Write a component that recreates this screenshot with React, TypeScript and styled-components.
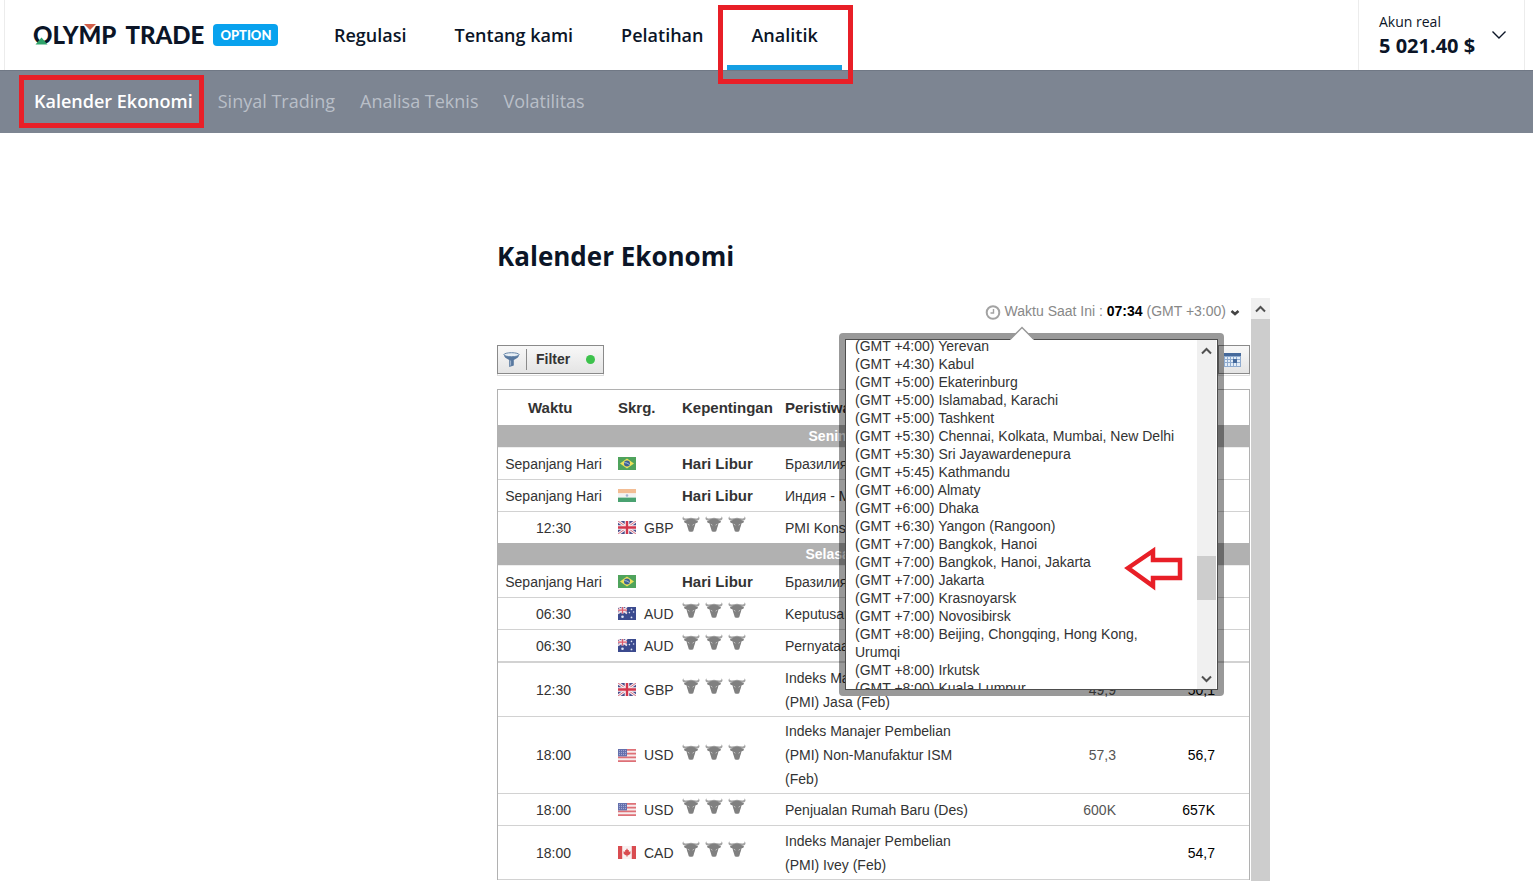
import React from "react";
import styled, { createGlobalStyle, css } from "styled-components";

const GlobalStyle = createGlobalStyle`
  *, *::before, *::after { box-sizing: border-box; }
  body { margin: 0; background: #fff; color: #333; font-family: "Liberation Sans", Arial, sans-serif; }
  button { font: inherit; color: inherit; cursor: pointer; }
  a { color: inherit; text-decoration: none; }
  svg { display: block; flex: none; }
`;

const uiFont = css`
  font-family: "Open Sans", "Noto Sans", sans-serif;
`;

const Page = styled.div`
  height: 100vh;
  display: flex;
  flex-direction: column;
  overflow: hidden;
`;

/* ---------- header ---------- */

const Header = styled.header`
  ${uiFont}
  display: flex;
  flex: none;
  height: 70px;
  margin: 0 8px 0 4px;
  border: 0 solid #ececec;
  border-width: 0 1px;
  color: #0b1527;
`;

const Brand = styled.a`
  display: flex;
  align-items: center;
  gap: 9px;
  width: 305px;
  padding-left: 28px;
`;

const Wordmark = styled.span`
  position: relative;
  display: flex;
  gap: 9px;
  font: 900 24px/24px Lato, sans-serif;
  white-space: nowrap;
`;

const WordmarkAccents = styled.svg`
  position: absolute;
  left: 0;
  top: 0;
`;

const Badge = styled.span`
  padding: 0 7px;
  border-radius: 4px;
  background: #08a2ee;
  color: #fff;
  font: 900 13px/22px Lato, sans-serif;
`;

const MainNav = styled.nav`
  display: flex;
  flex: 1;
`;

const NavLink = styled.a<{ $active?: boolean }>`
  position: relative;
  padding: 0 24px;
  border-bottom: 5px solid ${(p) => (p.$active ? "#149fe3" : "transparent")};
  font-size: 18px;
  font-weight: 600;
  line-height: 70px;
  white-space: nowrap;
`;

const Highlight = styled.span<{ $inset: string }>`
  position: absolute;
  inset: ${(p) => p.$inset};
  border: 5px solid #e81f27;
  z-index: 2;
`;

const Account = styled.button`
  display: flex;
  align-items: center;
  gap: 16px;
  width: 166px;
  padding: 0 0 0 20px;
  border: 0;
  border-left: 1px solid #ececec;
  background: none;
  text-align: left;
  white-space: nowrap;
`;

const AccountText = styled.span`
  display: flex;
  flex-direction: column;
  padding-bottom: 2px;
  font-size: 14px;
  line-height: 24px;
`;

const Balance = styled.strong`
  font-size: 20px;
`;

const SubNav = styled.nav`
  ${uiFont}
  display: flex;
  flex: none;
  gap: 25px;
  height: 63px;
  padding-left: 34px;
  border-top: 1px solid #707885;
  background: #7d8592;
`;

const SubLink = styled.a<{ $active?: boolean }>`
  position: relative;
  color: ${(p) => (p.$active ? "#fff" : "#b9bfc8")};
  font-size: 18px;
  font-weight: ${(p) => (p.$active ? 600 : 400)};
  line-height: 61px;
  white-space: nowrap;
`;

/* ---------- calendar widget ---------- */

const Main = styled.main`
  display: flex;
  flex-direction: column;
  flex: 1;
  min-height: 0;
  padding: 105px 263px 0 497px;
`;

const Title = styled.h1`
  ${uiFont}
  flex: none;
  margin: 0 0 24px;
  color: #0b1527;
  font-size: 26px;
  line-height: 36px;
`;

const Frame = styled.section`
  position: relative;
  display: grid;
  grid-template-columns: minmax(0, 1fr) 19px;
  flex: 1;
  min-height: 0;
`;

const FrameBody = styled.div`
  min-height: 0;
  overflow: hidden;
  padding-right: 1px;
`;

const ScrollTrack = styled.div`
  display: flex;
  flex-direction: column;
  align-items: stretch;
  background: #f0f0f0;
`;

const ScrollButton = styled.button`
  display: flex;
  align-items: center;
  justify-content: center;
  flex: none;
  height: 21px;
  padding: 0;
  border: 0;
  background: #f0f0f0;
`;

const ScrollThumb = styled.div<{ $height?: number }>`
  flex: ${(p) => (p.$height ? "none" : 1)};
  height: ${(p) => (p.$height ? `${p.$height}px` : "auto")};
  background: #cdcdcd;
`;

const TimeBar = styled.div`
  display: flex;
  justify-content: flex-end;
  padding-right: 10px;
`;

const TimeButton = styled.button`
  display: flex;
  align-items: center;
  gap: 4px;
  padding: 0;
  border: 0;
  background: none;
  color: #888;
  font-size: 14px;
  line-height: 27px;
  white-space: nowrap;

  strong { color: #000; }
`;

const Toolbar = styled.div`
  display: flex;
  justify-content: space-between;
  margin: 20px 0 15px;
`;

const ToolButton = styled.button`
  display: flex;
  align-items: center;
  height: 29px;
  padding: 0 8px 0 5px;
  border: 1px solid #8a8a8a;
  background: linear-gradient(#f8f8f8, #e4e4e4);
  box-shadow: 0 2px 0 -1px #fff, 0 2px 0 #ddd;
  font-size: 14px;
  font-weight: 700;
`;

const FilterLabel = styled.span`
  margin: 0 16px 0 6px;
  padding-left: 9px;
  border-left: 1px solid #8a8a8a;
  line-height: 21px;
`;

const Dot = styled.span`
  width: 9px;
  height: 9px;
  border-radius: 50%;
  background: #3cc24c;
`;

const Table = styled.table`
  width: 100%;
  table-layout: fixed;
  border-collapse: separate;
  border-spacing: 0;
  border: 1px solid #b1b1b1;
  border-bottom: 0;
  font-size: 14px;
  line-height: 24px;
`;

const Col = styled.col<{ $width?: number }>`
  width: ${(p) => (p.$width ? `${p.$width}px` : "auto")};
`;

const HeadCell = styled.th<{ $indent?: number }>`
  height: 35px;
  padding: 0 0 0 ${(p) => p.$indent ?? 5}px;
  font-size: 15px;
  text-align: left;
  white-space: nowrap;
`;

const DayCell = styled.th`
  height: 23px;
  padding: 0;
  border-bottom: 1px solid #eee;
  background: #b1b1b1;
  color: #fff;
  font-size: 14px;
  line-height: 22px;
`;

const Row = styled.tr<{ $height: number; $line: number }>`
  height: ${(p) => p.$height}px;

  td {
    padding: 0 5px;
    border-bottom: ${(p) => p.$line}px solid #d2d2d2;
  }
`;

const Cell = styled.td<{ $align?: "center" | "right"; $tone?: string }>`
  color: ${(p) => p.$tone ?? "inherit"};
  text-align: ${(p) => p.$align ?? "left"};
  white-space: nowrap;
`;

const Holiday = styled.strong`
  font-size: 15px;
`;

const Currency = styled.span`
  display: flex;
  align-items: center;
  gap: 8px;
  padding-left: 4px;
`;

const Bulls = styled.span`
  display: flex;
  gap: 5px;
  padding-bottom: 7px;
`;

/* ---------- time zone popup ---------- */

const Popup = styled.div`
  position: absolute;
  top: 35px;
  right: 46px;
  width: 385px;
  padding: 6px;
  border-radius: 4px;
  background: rgba(0, 0, 0, 0.4);
  z-index: 3;
`;

const Notch = styled.svg`
  position: absolute;
  left: 171px;
  top: -7px;
`;

const PopupBox = styled.div`
  display: grid;
  grid-template-columns: 1fr 19px;
  height: 351px;
  padding-right: 1px;
  border: 1px solid #4d4d4d;
  background: #fff;
  overflow: hidden;
`;

const ZoneList = styled.ul`
  min-height: 0;
  margin: -3px 0 0;
  padding: 0 16px 0 9px;
  list-style: none;
`;

const ZoneButton = styled.button`
  display: block;
  width: 100%;
  padding: 0;
  border: 0;
  background: none;
  font-size: 14px;
  line-height: 18px;
  text-align: left;
`;

const ThumbGap = styled.div<{ $grow: number }>`
  flex: ${(p) => p.$grow};
`;

const Pointer = styled.svg`
  position: absolute;
  left: 285px;
  top: 213px;
`;

/* ---------- icons ---------- */

const Chevron = ({ up }: { up?: boolean }) => (
  <svg width="11" height="8" viewBox="0 0 11 8" aria-hidden="true">
    <path d={up ? "M1 6.5 5.5 2 10 6.5" : "M1 1.5 5.5 6 10 1.5"} fill="none" stroke="#505050" strokeWidth="2" />
  </svg>
);

const Bull = () => (
  <svg width="18" height="16" viewBox="0 0 18 16" aria-hidden="true">
    <path
      d="M1.400.3C0 2 .1 3.600 2.200 4.500L4.400 5H13.600L15.800 4.500C17.900 3.600 18 2 16.600.3 16.700 1.800 15.900 2.600 14.300 2.500L12 2.300Q9 1.400 6 2.300L3.700 2.500C2.100 2.600 1.300 1.800 1.400.3Z"
      fill="#a2a2a2"
    />
    <path
      d="M5 3.400Q9 2 13 3.400L13.600 4.600 16 5.200 15.600 6.600 13.400 7.400C13.200 9.800 12.200 11 11.900 13L11.200 15.200Q9 16.200 6.800 15.200L6.100 13C5.800 11 4.800 9.800 4.600 7.400L2.400 6.600 2 5.200 4.400 4.600Z"
      fill="#808080"
    />
    <path d="M5.800 8.200 7.400 9.200M12.200 8.200 10.600 9.200" stroke="#c9c9c9" strokeWidth=".9" />
  </svg>
);

type FlagCode = "br" | "in" | "gb" | "au" | "us" | "ca";

const flagArt: Record<FlagCode, React.ReactNode> = {
  br: (
    <>
      <path fill="#4fa35c" d="M0 0h18v13H0z" />
      <path fill="#ece05a" d="m9 1.5 7 5-7 5-7-5z" />
      <circle cx="9" cy="6.5" r="3" fill="#3b5f96" />
      <path d="M6.3 5.6Q9 5.4 11.6 7.6" fill="none" stroke="#d8e6ee" strokeWidth=".7" />
    </>
  ),
  in: (
    <>
      <path fill="#f3bd94" d="M0 0h18v4.4H0z" />
      <path fill="#f3f3f3" d="M0 4.4h18v4.2H0z" />
      <path fill="#4aa271" d="M0 8.6h18V13H0z" />
      <circle cx="9" cy="6.5" r="1.3" fill="#a5b3d4" />
    </>
  ),
  gb: (
    <>
      <path fill="#4b4f8c" d="M0 0h18v13H0z" />
      <path d="m0 0 18 13M18 0 0 13" stroke="#f3eef2" strokeWidth="3" />
      <path d="m0 0 18 13M18 0 0 13" stroke="#dc7383" strokeWidth="1" />
      <path d="M9 0v13M0 6.5h18" stroke="#f7f0f2" strokeWidth="4.6" />
      <path d="M9 0v13M0 6.5h18" stroke="#d3364c" strokeWidth="2.4" />
    </>
  ),
  au: (
    <>
      <path fill="#3b4a8e" d="M0 0h18v13H0z" />
      <path d="m0 0 9 6.5M9 0 0 6.5" stroke="#f0dfe6" strokeWidth="1.6" />
      <path d="M4.5 0v6.5M0 3.2h9" stroke="#f6e6ea" strokeWidth="2.4" />
      <path d="M4.5 0v6.5M0 3.2h9" stroke="#dc5a6b" strokeWidth="1.2" />
      <g fill="#dfe5f5">
        <circle cx="4.5" cy="9.8" r="1.3" />
        <circle cx="13.5" cy="2.4" r=".8" />
        <circle cx="11.4" cy="5.6" r=".8" />
        <circle cx="15.6" cy="5" r=".8" />
        <circle cx="13.5" cy="10.4" r=".9" />
      </g>
    </>
  ),
  us: (
    <>
      <path fill="#f7eced" d="M0 0h18v13H0z" />
      <path d="M0 .9h18M0 4.6h18M0 8.4h18M0 12.1h18" stroke="#de7077" strokeWidth="1.8" />
      <path fill="#6470ad" d="M0 0h9v7.4H0z" />
      <path d="M1 1.6h7M1 3.6h7M1 5.6h7" stroke="#b7bfe0" strokeWidth=".8" strokeDasharray="1 1" />
    </>
  ),
  ca: (
    <>
      <path fill="#f8f2f2" d="M0 0h18v13H0z" />
      <path fill="#d94c50" d="M0 0h4.2v13H0zM13.8 0H18v13h-4.2z" />
      <path fill="#d94c50" d="m9 2.3 1 1.9 1-.3-.2 1.9 2-.3-.6 1.7.4.5-2.700 1.900h-.6v1.500h-.6V9.600h-.6L5.400 7.700l.4-.5-.6-1.700 2 .3L7 3.900l1 .3z" />
    </>
  ),
};

const Flag = ({ code }: { code: FlagCode }) => (
  <svg width="18" height="13" viewBox="0 0 18 13" aria-hidden="true">
    {flagArt[code]}
  </svg>
);

/* ---------- data ---------- */

interface EventRow {
  time: string;
  flag: FlagCode;
  currency?: string;
  event: string[];
  previous?: string;
  forecast?: string;
  height: number;
  line?: number;
}

interface Day {
  label: string;
  rows: EventRow[];
}

const days: Day[] = [
  {
    label: "Senin, 4 Maret 2019",
    rows: [
      { time: "Sepanjang Hari", flag: "br", event: ["Бразилия"], height: 32 },
      { time: "Sepanjang Hari", flag: "in", event: ["Индия - М"], height: 32 },
      { time: "12:30", flag: "gb", currency: "GBP", event: ["PMI Konstruksi"], height: 31, line: 0 },
    ],
  },
  {
    label: "Selasa, 5 Maret 2019",
    rows: [
      { time: "Sepanjang Hari", flag: "br", event: ["Бразилия"], height: 32 },
      { time: "06:30", flag: "au", currency: "AUD", event: ["Keputusan"], height: 32 },
      { time: "06:30", flag: "au", currency: "AUD", event: ["Pernyataan"], height: 33, line: 2 },
      { time: "12:30", flag: "gb", currency: "GBP", event: ["Indeks Manajer Pembelian", "(PMI) Jasa (Feb)"], previous: "49,9", forecast: "50,1", height: 54 },
      { time: "18:00", flag: "us", currency: "USD", event: ["Indeks Manajer Pembelian", "(PMI) Non-Manufaktur ISM", "(Feb)"], previous: "57,3", forecast: "56,7", height: 77 },
      { time: "18:00", flag: "us", currency: "USD", event: ["Penjualan Rumah Baru (Des)"], previous: "600K", forecast: "657K", height: 32 },
      { time: "18:00", flag: "ca", currency: "CAD", event: ["Indeks Manajer Pembelian", "(PMI) Ivey (Feb)"], forecast: "54,7", height: 54 },
    ],
  },
];

const zones = [
  "(GMT +4:00) Yerevan",
  "(GMT +4:30) Kabul",
  "(GMT +5:00) Ekaterinburg",
  "(GMT +5:00) Islamabad, Karachi",
  "(GMT +5:00) Tashkent",
  "(GMT +5:30) Chennai, Kolkata, Mumbai, New Delhi",
  "(GMT +5:30) Sri Jayawardenepura",
  "(GMT +5:45) Kathmandu",
  "(GMT +6:00) Almaty",
  "(GMT +6:00) Dhaka",
  "(GMT +6:30) Yangon (Rangoon)",
  "(GMT +7:00) Bangkok, Hanoi",
  "(GMT +7:00) Bangkok, Hanoi, Jakarta",
  "(GMT +7:00) Jakarta",
  "(GMT +7:00) Krasnoyarsk",
  "(GMT +7:00) Novosibirsk",
  "(GMT +8:00) Beijing, Chongqing, Hong Kong, Urumqi",
  "(GMT +8:00) Irkutsk",
  "(GMT +8:00) Kuala Lumpur",
];

/* ---------- sections ---------- */

const TopBar = () => (
  <Header>
    <Brand href="#">
      <Wordmark>
        <span>OLYMP</span>
        <span>TRADE</span>
        <WordmarkAccents width="70" height="24" viewBox="0 0 70 24" aria-hidden="true">
          <path d="M8.500 14.500 14.500 21.500H2.500z" fill="#2fa36b" />
          <path d="M51 1h12l-6 6z" fill="#d2604a" />
        </WordmarkAccents>
      </Wordmark>
      <Badge>OPTION</Badge>
    </Brand>
    <MainNav>
      <NavLink href="#">Regulasi</NavLink>
      <NavLink href="#">Tentang kami</NavLink>
      <NavLink href="#">Pelatihan</NavLink>
      <NavLink href="#" $active>
        Analitik
        <Highlight $inset="5px -11px -19px -9px" />
      </NavLink>
    </MainNav>
    <Account type="button">
      <AccountText>
        Akun real
        <Balance>5 021.40 $</Balance>
      </AccountText>
      <svg width="16" height="10" viewBox="0 0 16 10" aria-hidden="true">
        <path d="m1.500 1.500 6.500 6.500 6.500-6.500" fill="none" stroke="#0b1527" strokeWidth="1.400" />
      </svg>
    </Account>
  </Header>
);

const SectionNav = () => (
  <SubNav>
    <SubLink href="#" $active>
      Kalender Ekonomi
      <Highlight $inset="4px -11px 5px -15px" />
    </SubLink>
    <SubLink href="#">Sinyal Trading</SubLink>
    <SubLink href="#">Analisa Teknis</SubLink>
    <SubLink href="#">Volatilitas</SubLink>
  </SubNav>
);

const CurrentTime = () => (
  <TimeBar>
    <TimeButton type="button" aria-expanded="true">
      <svg width="16" height="16" viewBox="0 0 16 16" aria-hidden="true">
        <circle cx="8" cy="8.500" r="6.300" fill="#fff" stroke="#a3a3a3" strokeWidth="2" />
        <path d="M8.500 5v4H5.500" fill="none" stroke="#a3a3a3" strokeWidth="1.400" />
      </svg>
      <span>
        Waktu Saat Ini : <strong>07:34</strong> (GMT +3:00)
      </span>
      <svg width="10" height="8" viewBox="0 0 10 8" aria-hidden="true">
        <path d="M1.500 3 5 6 8.500 3" fill="none" stroke="#444" strokeWidth="2.600" />
      </svg>
    </TimeButton>
  </TimeBar>
);

const Tools = () => (
  <Toolbar>
    <ToolButton type="button">
      <svg width="17" height="16" viewBox="0 0 17 16" aria-hidden="true">
        <path d="M.8 2.500C1 5 3 6.500 6.200 8v7l4.600-1.500V8C14 6.500 16 5 16.200 2.500z" fill="#58789f" />
        <ellipse cx="8.500" cy="2.700" rx="7.600" ry="2" fill="#e8eff5" stroke="#6685a8" />
        <path d="M7.600 8.500v5" stroke="#a4b8cf" />
      </svg>
      <FilterLabel>Filter</FilterLabel>
      <Dot />
    </ToolButton>
    <ToolButton type="button" aria-label="Kalender">
      <svg width="17" height="14" viewBox="0 0 17 14" aria-hidden="true">
        <path d="M0 0h17v14H0z" fill="#8fabcf" />
        <path d="M0 0h17v3H0z" fill="#45699b" />
        <path
          d="M1 4h2v2H1zM4 4h2v2H4zM7 4h2v2H7zM10 4h2v2h-2zM13 4h3v2h-3zM1 7h2v2H1zM4 7h2v2H4zM7 7h2v2H7zM13 7h3v2h-3zM1 10h2v3H1zM4 10h2v3H4zM7 10h2v3H7zM10 10h2v3h-2zM13 10h3v3h-3z"
          fill="#e3edf7"
        />
        <path d="M9 6h4v4H9z" fill="#45699b" />
      </svg>
    </ToolButton>
  </Toolbar>
);

const CalendarTable = () => (
  <Table>
    <colgroup>
      <Col $width={111} />
      <Col $width={68} />
      <Col $width={103} />
      <Col />
      <Col $width={110} />
      <Col $width={99} />
      <Col $width={29} />
    </colgroup>
    <thead>
      <tr>
        <HeadCell $indent={30}>Waktu</HeadCell>
        <HeadCell $indent={9}>Skrg.</HeadCell>
        <HeadCell>Kepentingan</HeadCell>
        <HeadCell colSpan={4}>Peristiwa</HeadCell>
      </tr>
    </thead>
    {days.map((day) => (
      <tbody key={day.label}>
        <tr>
          <DayCell colSpan={7}>{day.label}</DayCell>
        </tr>
        {day.rows.map((row, i) => (
          <Row key={i} $height={row.height} $line={row.line ?? 1}>
            <Cell $align="center">{row.time}</Cell>
            <Cell>
              <Currency>
                <Flag code={row.flag} />
                {row.currency}
              </Currency>
            </Cell>
            <Cell>{row.currency ? <Bulls><Bull /><Bull /><Bull /></Bulls> : <Holiday>Hari Libur</Holiday>}</Cell>
            <Cell>
              {row.event.map((line, n) => (
                <React.Fragment key={line}>
                  {n > 0 && <br />}
                  {line}
                </React.Fragment>
              ))}
            </Cell>
            <Cell $align="right" $tone="#555">{row.previous}</Cell>
            <Cell $align="right" $tone="#000">{row.forecast}</Cell>
            <Cell />
          </Row>
        ))}
      </tbody>
    ))}
  </Table>
);

const TimeZonePopup = () => (
  <Popup>
    <PopupBox>
      <ZoneList>
        {zones.map((zone) => (
          <li key={zone}>
            <ZoneButton type="button">{zone}</ZoneButton>
          </li>
        ))}
      </ZoneList>
      <ScrollTrack>
        <ScrollButton type="button" aria-label="Gulir ke atas"><Chevron up /></ScrollButton>
        <ThumbGap $grow={195} />
        <ScrollThumb $height={44} />
        <ThumbGap $grow={68} />
        <ScrollButton type="button" aria-label="Gulir ke bawah"><Chevron /></ScrollButton>
      </ScrollTrack>
    </PopupBox>
    <Notch width="24" height="15" viewBox="0 0 24 15" aria-hidden="true">
      <path d="M0 14 12 1.500 24 14v1H0z" fill="#fff" />
      <path d="M0 13.500 12 1.500l12 12" fill="none" stroke="#999" strokeWidth="1.500" />
    </Notch>
    <Pointer width="62" height="46" viewBox="0 0 62 46" aria-hidden="true">
      <path d="M4 22 29 5v9h27v18H29v8z" fill="#fff" stroke="#e81f27" strokeWidth="4.500" />
    </Pointer>
  </Popup>
);

export default function App() {
  return (
    <Page>
      <GlobalStyle />
      <TopBar />
      <SectionNav />
      <Main>
        <Title>Kalender Ekonomi</Title>
        <Frame>
          <FrameBody>
            <CurrentTime />
            <Tools />
            <CalendarTable />
          </FrameBody>
          <ScrollTrack>
            <ScrollButton type="button" aria-label="Gulir ke atas"><Chevron up /></ScrollButton>
            <ScrollThumb />
          </ScrollTrack>
          <TimeZonePopup />
        </Frame>
      </Main>
    </Page>
  );
}
